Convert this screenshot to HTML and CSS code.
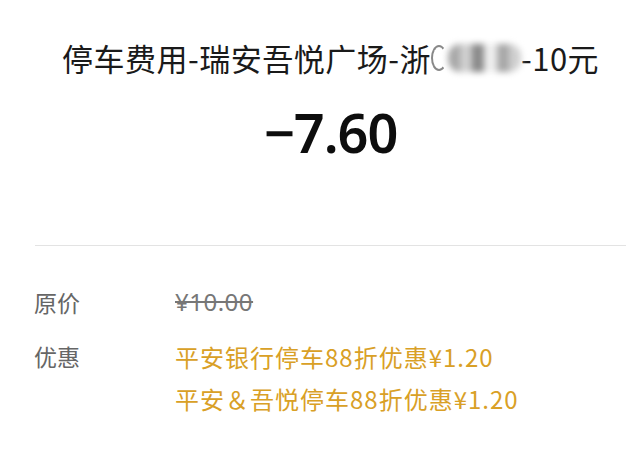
FILE: index.html
```html
<!DOCTYPE html>
<html lang="zh-CN">
<head>
    <meta charset="UTF-8">
    <meta name="viewport" content="width=device-width, initial-scale=1.0">
    <title>账单详情</title>
    <link rel="stylesheet" href="styles.css">
</head>
<body>
    <div class="bill">
        <!-- 顶部：商户 + 金额 -->
        <div class="bill-head">
            <div class="bill-title">停车费用-瑞安吾悦广场-浙<span class="plate"><span class="plate-mask"><i></i><i></i><i></i><i></i><i></i><i></i></span></span>-10元</div>
            <div class="bill-amount">−7.60</div>
        </div>

        <!-- 明细 -->
        <div class="bill-detail">
            <div class="row">
                <div class="label">原价</div>
                <div class="value origin">¥10.00</div>
            </div>
            <div class="row">
                <div class="label">优惠</div>
                <div class="value discount">
                    <div>平安银行停车88折优惠¥1.20</div>
                    <div>平安＆吾悦停车88折优惠¥1.20</div>
                </div>
            </div>
        </div>
    </div>
</body>
</html>
```

FILE: styles.css
```css
/* Reset */
* {
    margin: 0;
    padding: 0;
    box-sizing: border-box;
}

body {
    font-family: "Noto Sans CJK SC", "Noto Sans", sans-serif;
    background-color: #fff;
    color: #111;
    width: 626px;
    height: 464px;
    overflow: hidden;
}

/* Header */
.bill-head {
    padding-top: 38px;
    margin-left: 35px;
    padding-bottom: 83px;
    border-bottom: 1px solid #e3e3e3;
    display: flex;
    flex-direction: column;
    align-items: center;
}

.bill-title {
    font-size: 31px;
    letter-spacing: 0.5px;
    line-height: 40px;
    color: #1a1a1a;
    white-space: nowrap;
    display: flex;
    align-items: center;
}

/* 车牌打码 */
.plate {
    display: inline-flex;
    align-items: center;
    width: 90px;
    height: 34px;
    gap: 1px;
}

/* 车牌首字母残影 */
.plate::before {
    content: "";
    width: 12px;
    height: 22px;
    border: 2px solid #888;
    border-right-color: transparent;
    border-radius: 50%;
    flex-shrink: 0;
}

.plate-mask {
    display: flex;
    flex: 1;
    height: 28px;
    filter: blur(3px);
    border-radius: 12px;
    overflow: hidden;
}

.plate-mask i {
    flex: 1;
    background: #a8a8a8;
}

.plate-mask i:nth-child(2n) {
    background: #cfcfcf;
}

.plate-mask i:nth-child(3) {
    background: #8a8a8a;
}

.plate-mask i:nth-child(4) {
    background: #eee;
}

.bill-amount {
    margin-top: 24px;
    font-family: "Noto Sans", sans-serif;
    font-size: 54px;
    font-weight: 600;
    line-height: 60px;
    color: #0d0d0d;
    letter-spacing: -1px;
}

/* Detail rows */
.bill-detail {
    padding: 36px 0 0 34px;
    display: flex;
    flex-direction: column;
    gap: 14px;
}

.row {
    display: flex;
}

.label {
    width: 141px;
    font-size: 23px;
    line-height: 40px;
    color: #666;
}

.value {
    font-size: 24px;
    line-height: 40px;
    letter-spacing: 1px;
}

.origin {
    color: #777;
    text-decoration: line-through;
    font-family: "Noto Sans", "Noto Sans CJK SC", sans-serif;
    letter-spacing: 0.5px;
}

.discount {
    color: #d9a026;
    line-height: 42px;
}
```
